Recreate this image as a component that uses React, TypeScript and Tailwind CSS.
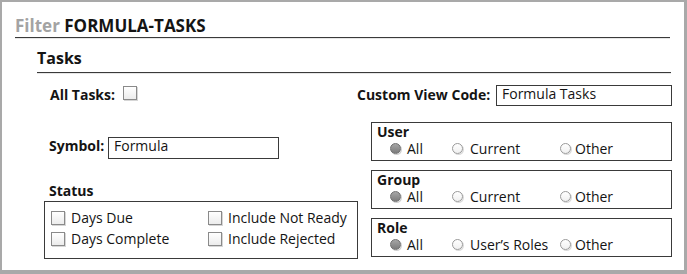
import React from 'react';

const Checkbox = () => (
  <div className="w-[14px] h-[14px] shrink-0 border border-[#8a8a8a] bg-gradient-to-b from-white to-[#ececec] shadow-[1px_1px_0_#d6d6d6]" />
);

const Radio = ({ checked }: { checked?: boolean }) =>
  checked ? (
    <div className="w-[11px] h-[11px] shrink-0 rounded-full border border-[#6f6f6f] bg-gradient-to-b from-[#a6a6a6] to-[#7c7c7c] shadow-[1px_1px_0_#d0d0d0]" />
  ) : (
    <div className="w-[11px] h-[11px] shrink-0 rounded-full border border-[#9a9a9a] bg-gradient-to-b from-white to-[#f0f0f0] shadow-[1px_1px_0_#dadada]" />
  );

interface OptionGroupProps {
  title: string;
  middle: string;
}

const OptionGroup = ({ title, middle }: OptionGroupProps) => (
  <div className="h-[39px] border border-[#3a3a3a] pl-[5px] pt-[1px]">
    <div className="text-[14px] leading-[16px] font-bold">{title}</div>
    <div className="flex items-center mt-[1px] pl-[13px] text-[14px] leading-[15px]">
      <div className="w-[62px] flex items-center gap-[6px]">
        <Radio checked />
        <span>All</span>
      </div>
      <div className="w-[108px] flex items-center gap-[7px]">
        <Radio />
        <span>{middle}</span>
      </div>
      <div className="flex items-center gap-[4px]">
        <Radio />
        <span>Other</span>
      </div>
    </div>
  </div>
);

const StatusItem = ({ label }: { label: string }) => (
  <div className="flex items-start gap-[6px] text-[14px] leading-[14px]">
    <Checkbox />
    <span>{label}</span>
  </div>
);

const App = () => {
  return (
    <div className="w-[687px] h-[274px] bg-white border-l-2 border-t-2 border-r-[3px] border-b-4 border-[#a9a9a9] pl-[13px] pt-[12px] text-[#141414] font-['Open_Sans',sans-serif]">
      <div className="w-[655px] border-b border-[#3a3a3a] shadow-[0_1px_0_#e6e6e6]">
        <h1 className="text-[17px] leading-[23px] font-bold">
          <span className="text-[#a3a3a3]">Filter</span> FORMULA-TASKS
        </h1>
      </div>

      <div className="ml-[22px] mt-[9px] w-[635px]">
        <h2 className="w-[634px] text-[16px] leading-[22px] font-bold pb-[3px] border-b border-[#3a3a3a] shadow-[0_1px_0_#e6e6e6]">
          Tasks
        </h2>

        <div className="pl-[7px] pt-[12px]">
          <div className="flex justify-between h-[21px]">
            <div className="flex items-start pl-[6px]">
              <span className="w-[73px] text-[14px] leading-[20px] font-bold">All Tasks:</span>
              <div className="mt-[1px]">
                <Checkbox />
              </div>
            </div>
            <div className="w-[315px] flex items-start">
              <span className="w-[139px] text-[14px] leading-[20px] font-bold">Custom View Code:</span>
              <div className="w-[176px] h-[21px] border border-[#3a3a3a] pl-[5px] text-[14px] leading-[14px] pt-[1px]">
                Formula Tasks
              </div>
            </div>
          </div>

          <div className="flex justify-between mt-[16px]">
            <div className="w-[314px] pt-[15px]">
              <div className="flex items-start pl-[5px]">
                <span className="w-[59px] text-[14px] leading-[18px] font-bold">Symbol:</span>
                <div className="w-[171px] h-[22px] border border-[#3a3a3a] pl-[5px] text-[14px] leading-[14px] pt-[1px]">
                  Formula
                </div>
              </div>
              <div className="pl-[5px] mt-[22px] text-[14px] leading-[20px] font-bold">Status</div>
              <div className="h-[58px] border border-[#3a3a3a] pl-[6px] pt-[9px]">
                <div className="flex">
                  <div className="w-[157px] flex flex-col gap-[7px]">
                    <StatusItem label="Days Due" />
                    <StatusItem label="Days Complete" />
                  </div>
                  <div className="flex flex-col gap-[7px]">
                    <StatusItem label="Include Not Ready" />
                    <StatusItem label="Include Rejected" />
                  </div>
                </div>
              </div>
            </div>

            <div className="w-[301px] flex flex-col gap-[9px]">
              <OptionGroup title="User" middle="Current" />
              <OptionGroup title="Group" middle="Current" />
              <OptionGroup title="Role" middle="User’s Roles" />
            </div>
          </div>
        </div>
      </div>
    </div>
  );
};

export default App;
